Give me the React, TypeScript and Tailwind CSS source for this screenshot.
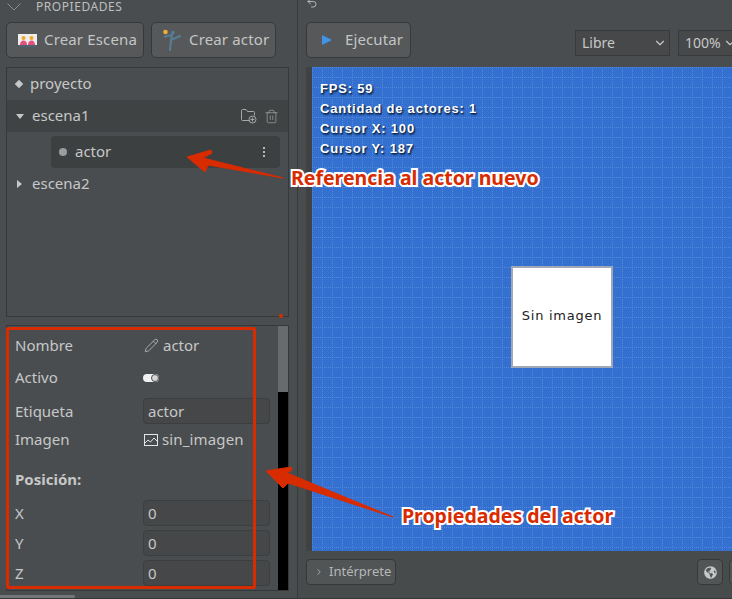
import React from 'react';
import { ChevronDown, ChevronRight, Pencil, Trash2, Undo2 } from 'lucide-react';
import { FaGlobeAmericas } from 'react-icons/fa';

const SceneIcon = () => (
  <svg width="19" height="15" viewBox="0 0 19 15" className="shrink-0">
    <rect x="0" y="1" width="19" height="11" fill="#eeeeea" />
    <circle cx="5.500" cy="5" r="2" fill="#f3a42c" />
    <circle cx="13.500" cy="5" r="2" fill="#f3a42c" />
    <path d="M2 12c0-3 1.500-4.500 3.500-4.500S9 9 9 12zM10 12c0-3 1.500-4.500 3.500-4.500S17 9 17 12z" fill="#e4517f" />
    <rect x="1" y="12.500" width="17" height="1.500" fill="#48657c" />
  </svg>
);

const ActorIcon = () => (
  <svg width="20" height="22" viewBox="0 0 20 22" className="shrink-0">
    <circle cx="3.500" cy="3" r="2.300" fill="#f0ad3c" />
    <path d="M9 12l1-7M9 12l-1 9M9 11l9-4M10 6L3 7.500" fill="none" stroke="#567d94" strokeWidth="2.200" strokeLinecap="round" />
    <circle cx="11" cy="3.500" r="1.800" fill="#567d94" />
  </svg>
);

const FolderAddIcon = () => (
  <svg width="16" height="16" viewBox="0 0 16 16" fill="none" stroke="#a5a7a8" strokeWidth="1" className="ml-auto">
    <path d="M9 12.500H1.500a1 1 0 0 1-1-1v-9a1 1 0 0 1 1-1h3.500l1.500 2h6a1 1 0 0 1 1 1v3" />
    <circle cx="11.500" cy="11.500" r="3.500" />
    <path d="M11.500 9.500v4M9.500 11.500h4" />
  </svg>
);

const PictureIcon = () => (
  <svg width="14" height="12" viewBox="0 0 14 12" fill="none" stroke="#e4e5e5" strokeWidth="1" className="ml-[1px] shrink-0">
    <rect x="0.500" y="0.500" width="13" height="11" />
    <path d="M1 9l3-3 2.500 2L10 4l3 3" />
  </svg>
);

const Field = ({ label, value }: { label: string; value: string }) => (
  <div className="flex items-center h-[26px]">
    <span className="w-[136px] pl-[8px]">{label}</span>
    <div className="w-[127px] h-[26px] rounded-[4px] border border-[#3c3f40] bg-[#454748] pl-1 leading-[24px]">{value}</div>
  </div>
);

const Toolbutton = ({ children, className }: { children: React.ReactNode; className: string }) => (
  <button className={`flex items-center shrink-0 h-[36px] rounded-[5px] border border-[#36393a] bg-[#565859] text-[#c4c6c6] ${className}`}>
    {children}
  </button>
);

export default function App() {
  return (
    <div className="relative flex w-[732px] h-[599px] overflow-hidden border-b border-[#36393a] bg-[#4a4d4f] text-[15px] text-[#c6c8c8] font-['Noto_Sans',sans-serif]">
      <aside className="w-[298px] shrink-0 flex flex-col border-r border-[#37393a] relative">
        <div className="h-[14px] flex items-center text-[12px] leading-[14px] text-[#bdbfbf]">
          <svg width="14" height="8" viewBox="0 0 14 8" fill="none" stroke="#8a8d8e" strokeWidth="1" className="ml-[7px]">
            <path d="M0.500 0.500L7 7l6.500-6.500" />
          </svg>
          <span className="ml-[15px] tracking-[0.55px]">PROPIEDADES</span>
        </div>
        <div className="flex gap-[7px] mt-[8px] px-[6px]">
          <Toolbutton className="w-[138px] pl-[11px] gap-[7px]">
            <SceneIcon />
            <span className="tracking-[0.15px] -mt-px">Crear Escena</span>
          </Toolbutton>
          <Toolbutton className="w-[125px] pl-[10px] gap-[7px]">
            <ActorIcon />
            <span className="tracking-[0.15px] -mt-px">Crear actor</span>
          </Toolbutton>
        </div>
        <div className="ml-[6px] w-[283px] mt-[9px] h-[250px] border border-[#36393a] flex flex-col">
          <div className="h-[32px] flex items-center pl-[9px] gap-[8px]">
            <span className="w-[6px] h-[6px] rotate-45 bg-[#c6c8c8]" />
            <span className="-mt-px">proyecto</span>
          </div>
          <div className="h-[32px] flex items-center bg-[#404344] pl-[9px]">
            <span className="w-0 h-0 border-x-[4px] border-x-transparent border-t-[5px] border-t-[#c6c8c8]" />
            <span className="ml-[8px] -mt-px">escena1</span>
            <FolderAddIcon />
            <Trash2 size={15} strokeWidth={1} className="ml-[7px] mr-[9px] text-[#b0b2b3]" />
          </div>
          <div className="ml-[44px] mr-[8px] mt-[4px] h-[32px] rounded-[4px] bg-[#3d4041] flex items-center pl-[8px]">
            <span className="w-[8px] h-[8px] rounded-full bg-[#9a9c9d]" />
            <span className="ml-[8px] -mt-px">actor</span>
            <span className="ml-auto mr-[15px] flex flex-col gap-[2px]">
              <span className="w-[2px] h-[2px] bg-[#b5b7b7]" />
              <span className="w-[2px] h-[2px] bg-[#b5b7b7]" />
              <span className="w-[2px] h-[2px] bg-[#b5b7b7]" />
            </span>
          </div>
          <div className="h-[32px] flex items-center pl-[10px]">
            <span className="w-0 h-0 border-y-[4px] border-y-transparent border-l-[5px] border-l-[#c6c8c8]" />
            <span className="ml-[10px] -mt-px">escena2</span>
          </div>
        </div>
        <div className="ml-[6px] w-[283px] mt-[8px] h-[266px] border border-[#36393a] flex">
          <div className="flex-1 min-w-0 flex flex-col">
            <div className="h-[40px] flex items-center">
              <span className="w-[136px] pl-[8px] -mt-[2px]">Nombre</span>
              <Pencil size={15} strokeWidth={1.200} className="ml-[1px] -mt-px" />
              <span className="ml-[4px] -mt-[2px]">actor</span>
            </div>
            <div className="h-[24px] flex items-center">
              <span className="w-[136px] pl-[8px] -mt-[2px]">Activo</span>
              <span className="w-[16px] h-[8px] rounded-full bg-[#f1f1f1] relative">
                <span className="absolute right-0 top-0 w-[8px] h-[8px] rounded-full border border-[#4a4d4f] bg-[#d5d6d6]" />
              </span>
            </div>
            <div className="mt-[8px]"><Field label="Etiqueta" value="actor" /></div>
            <div className="h-[32px] flex items-center">
              <span className="w-[136px] pl-[8px] -mt-[2px]">Imagen</span>
              <PictureIcon />
              <span className="ml-[4px] -mt-[2px] tracking-[0.15px]">sin_imagen</span>
            </div>
            <div className="h-[24px] flex items-center mt-[12px] pb-[2px] pl-[8px] font-bold">Posición:</div>
            <div className="mt-[8px] flex flex-col gap-[4px]">
              <Field label="X" value="0" />
              <Field label="Y" value="0" />
              <Field label="Z" value="0" />
            </div>
          </div>
          <div className="w-[10px] bg-black">
            <div className="h-[66px] bg-[#686a6b]" />
          </div>
        </div>
        <div className="absolute left-0 bottom-0 w-[75px] h-[3px] rounded-r-full bg-[#747678]" />
      </aside>

      <main className="flex-1 min-w-0 flex flex-col bg-[linear-gradient(#4a4d4f,#484b4c)]">
        <div className="h-[14px] pl-[8px] flex items-center">
          <Undo2 size={12} strokeWidth={1.700} className="text-[#c6c8c8] -mt-[8px]" />
        </div>
        <div className="flex items-start mt-[8px] pl-[8px] h-[45px]">
          <Toolbutton className="w-[105px] pl-[15px] gap-[13px]">
            <span className="w-0 h-0 border-y-[5px] border-y-transparent border-l-[10px] border-l-[#3f94ea]" />
            <span className="tracking-[0.1px] -mt-px">Ejecutar</span>
          </Toolbutton>
          <div className="ml-[164px] mt-[8px] w-[95px] h-[26px] shrink-0 flex items-center justify-between border border-[#37393a] bg-[#464849] pl-[6px] pr-[2px] text-[14px]">
            <span className="-mt-[2px]">Libre</span>
            <ChevronDown size={14} strokeWidth={2} />
          </div>
          <div className="ml-[8px] mt-[8px] w-[70px] h-[26px] shrink-0 flex items-center gap-[2px] border border-[#37393a] bg-[#464849] pl-[6px] text-[14px]">
            <span className="-mt-[2px]">100%</span>
            <ChevronDown size={14} strokeWidth={2} />
          </div>
        </div>
        <div className="ml-[8px] h-[484px] border-l-[6px] border-[#3f4142] relative overflow-hidden bg-[#3370d0] [background-position:0_0,0_0] [background-image:conic-gradient(from_270deg_at_1px_1px,#5587da_90deg,transparent_0),conic-gradient(from_270deg_at_1px_1px,#5587da_90deg,transparent_0)] [background-size:2px_10px,10px_2px]">
          <div className="pl-[8px] pt-[12px] text-[13px] leading-[20px] font-bold text-white font-['Liberation_Sans',sans-serif] tracking-[0.8px] [text-shadow:1px_1px_1px_#0e2a55,1px_2px_2px_#12305f]">
            <div>FPS: 59</div>
            <div>Cantidad de actores: 1</div>
            <div>Cursor X: 100</div>
            <div>Cursor Y: 187</div>
          </div>
          <div className="absolute left-[199px] top-[199px] w-[102px] h-[102px] flex items-center justify-center pb-[3px] bg-white border-2 border-[#a0a8b5] text-[#222] tracking-[0.75px] font-['DejaVu_Sans',sans-serif] text-[13px]">
            Sin imagen
          </div>
        </div>
        <div className="flex items-center h-[47px] pl-[8px] pb-[5px]">
          <button className="w-[90px] h-[26px] shrink-0 rounded-[4px] border border-[#36393a] bg-[#525556] flex items-center pl-[7px] text-[13px] text-[#b5b7b7]">
            <ChevronRight size={10} strokeWidth={2} />
            <span className="ml-[5px]">Intérprete</span>
          </button>
          <button className="ml-[301px] w-[26px] h-[26px] shrink-0 rounded-[4px] border border-[#36393a] bg-[#525556] flex items-center justify-center">
            <FaGlobeAmericas size={13} className="text-[#c6c8c8]" />
          </button>
          <button className="ml-[6px] w-[26px] h-[26px] shrink-0 rounded-[4px] border border-[#36393a] bg-[#525556]" />
        </div>
      </main>

      {/* anotaciones sobre la captura */}
      <div className="absolute left-[6px] top-[327px] w-[250px] h-[262px] rounded-[2px] border-[3px] border-[#d92b00]" />
      <div className="absolute left-[279px] top-[314px] w-[4px] h-[4px] rounded-full bg-[#d92b00]" />
      <svg className="absolute inset-0 pointer-events-none" width="732" height="599">
        <g fill="#d92b00" stroke="#d92b00" strokeWidth="1" strokeLinejoin="round">
          <polygon points="187,157 211,150 212,153 203,158 283,178 208,165 205,172" />
          <polygon points="266,471 291,467 292,470 287,473 393,517 288,483 283,488" />
        </g>
      </svg>
      <span className="absolute left-[291px] top-[164px] text-[19.500px] leading-[28px] font-bold text-[#d92b00] [-webkit-text-stroke:4px_#ffffff] [paint-order:stroke_fill]">
        Referencia al actor nuevo
      </span>
      <span className="absolute left-[402px] top-[502px] text-[19.500px] leading-[28px] font-bold text-[#d92b00] [-webkit-text-stroke:4px_#ffffff] [paint-order:stroke_fill]">
        Propiedades del actor
      </span>
    </div>
  );
}
